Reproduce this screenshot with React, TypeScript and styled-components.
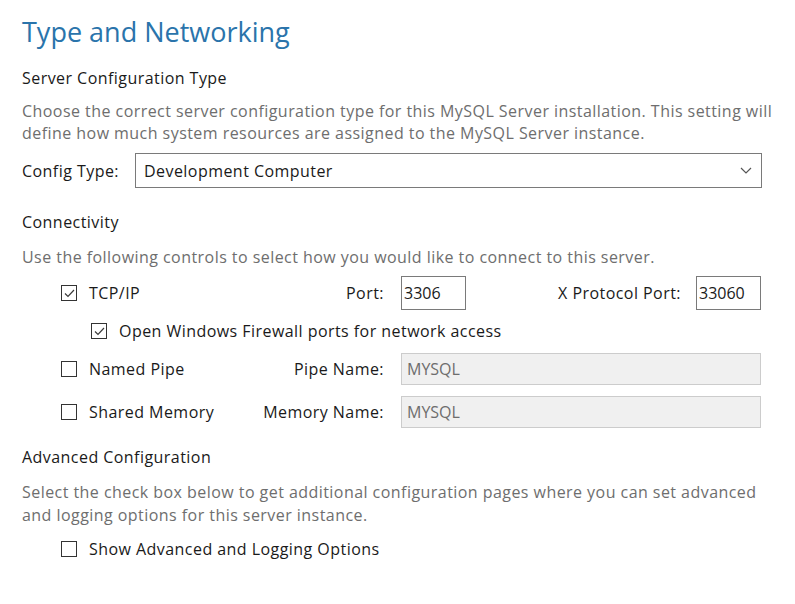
import React from 'react'
import styled, { createGlobalStyle } from 'styled-components'

const GlobalStyle = createGlobalStyle`
    html, body {
        margin: 0;
        padding: 0;
        background: #ffffff;
    }
    body {
        font-family: 'Open Sans', 'Noto Sans', sans-serif;
        font-size: 16px;
        letter-spacing: 0.45px;
        color: #1a1a1a;
    }
`

const CheckIcon = () => (
    <svg width="11" height="9" viewBox="0 0 11 9">
        <polyline
            points="1,4.5 4,7.5 10,1"
            fill="none"
            stroke="#3a3a3a"
            strokeWidth="1.2"
        />
    </svg>
)

const Check = ({ checked, label }: { checked?: boolean; label: string }) => (
    <SCheckLabel>
        <SBox>{checked && <CheckIcon />}</SBox>
        <span>{label}</span>
    </SCheckLabel>
)

export default function App() {
    return (
        <SPage>
            <GlobalStyle />
            <STitle>Type and Networking</STitle>

            <SHeading $top={17}>Server Configuration Type</SHeading>
            <SDesc $top={11}>
                Choose the correct server configuration type for this MySQL Server installation. This setting will
                <br />
                define how much system resources are assigned to the MySQL Server instance.
            </SDesc>
            <SConfigRow>
                <SConfigLabel>Config Type:</SConfigLabel>
                <SSelect>
                    <span>Development Computer</span>
                    <svg width="12" height="7" viewBox="0 0 12 7">
                        <polyline points="1,1 6,6 11,1" fill="none" stroke="#555" strokeWidth="1.2" />
                    </svg>
                </SSelect>
            </SConfigRow>

            <SHeading $top={23}>Connectivity</SHeading>
            <SDesc $top={13}>Use the following controls to select how you would like to connect to this server.</SDesc>

            <SConnGrid>
                <SRow $top={8} $height={34}>
                    <Check checked label="TCP/IP" />
                    <SFieldLabel>Port:</SFieldLabel>
                    <SPortGroup>
                        <SInput $width={65}>3306</SInput>
                        <SPortLabel>X Protocol Port:</SPortLabel>
                        <SInput $width={65}>33060</SInput>
                    </SPortGroup>
                </SRow>
                <SSubRow>
                    <Check checked label="Open Windows Firewall ports for network access" />
                </SSubRow>
                <SRow $top={11} $height={32}>
                    <Check label="Named Pipe" />
                    <SFieldLabel>Pipe Name:</SFieldLabel>
                    <SInput $disabled>MYSQL</SInput>
                </SRow>
                <SRow $top={11} $height={32}>
                    <Check label="Shared Memory" />
                    <SFieldLabel>Memory Name:</SFieldLabel>
                    <SInput $disabled>MYSQL</SInput>
                </SRow>
            </SConnGrid>

            <SHeading $top={18}>Advanced Configuration</SHeading>
            <SDesc $top={13} $lh={23}>
                Select the check box below to get additional configuration pages where you can set advanced
                <br />
                and logging options for this server instance.
            </SDesc>
            <SAdvanced>
                <Check label="Show Advanced and Logging Options" />
            </SAdvanced>
        </SPage>
    )
}

const SPage = styled.div`
    display: flex;
    flex-direction: column;
    width: 795px;
    height: 604px;
    box-sizing: border-box;
    padding: 14px 0 0 22px;
    overflow: hidden;
`
const STitle = styled.h1`
    margin: 0;
    font-size: 27px;
    font-weight: 400;
    letter-spacing: 0;
    line-height: 36px;
    color: #2a74ab;
`
const SHeading = styled.div<{ $top: number }>`
    margin-top: ${(p) => p.$top}px;
    line-height: 22px;
    color: #1a1a1a;
`
const SDesc = styled.div<{ $top: number; $lh?: number }>`
    margin-top: ${(p) => p.$top}px;
    line-height: ${(p) => p.$lh ?? 22}px;
    color: #6e6e6e;
    white-space: nowrap;
`
const SConfigRow = styled.div`
    display: flex;
    align-items: center;
    margin-top: 9px;
    height: 35px;
`
const SConfigLabel = styled.span`
    width: 113px;
`
const SSelect = styled.div`
    display: flex;
    align-items: center;
    justify-content: space-between;
    box-sizing: border-box;
    width: 627px;
    height: 35px;
    padding: 0 9px 0 8px;
    border: 1px solid #7a7a7a;
    background: #fff;
`
const SConnGrid = styled.div`
    display: flex;
    flex-direction: column;
    padding-left: 39px;
`
const SRow = styled.div<{ $top: number; $height: number }>`
    display: grid;
    grid-template-columns: 184px 156px 360px;
    align-items: center;
    margin-top: ${(p) => p.$top}px;
    height: ${(p) => p.$height}px;
`
const SSubRow = styled.div`
    display: flex;
    align-items: center;
    margin-top: 10px;
    height: 22px;
    padding-left: 30px;
`
const SFieldLabel = styled.span`
    text-align: right;
    padding-right: 17px;
`
const SPortGroup = styled.div`
    display: flex;
    align-items: center;
    height: 100%;
`
const SPortLabel = styled.span`
    margin-left: auto;
    margin-right: 15px;
`
const SInput = styled.div<{ $width?: number; $disabled?: boolean }>`
    display: flex;
    align-items: center;
    box-sizing: border-box;
    width: ${(p) => (p.$width ? `${p.$width}px` : '100%')};
    height: 100%;
    padding-left: ${(p) => (p.$disabled ? 5 : 2)}px;
    letter-spacing: 0;
    border: 1px solid ${(p) => (p.$disabled ? '#cccccc' : '#7a7a7a')};
    background: ${(p) => (p.$disabled ? '#f0f0f0' : '#ffffff')};
    color: ${(p) => (p.$disabled ? '#6d6d6d' : '#1a1a1a')};
`
const SCheckLabel = styled.label`
    display: flex;
    align-items: center;
    gap: 12px;
    line-height: 22px;
    white-space: nowrap;
`
const SBox = styled.span`
    display: flex;
    align-items: center;
    justify-content: center;
    box-sizing: border-box;
    width: 16px;
    height: 16px;
    border: 1px solid #333333;
    background: #fff;
`
const SAdvanced = styled.div`
    display: flex;
    margin-top: 11px;
    padding-left: 39px;
    height: 22px;
`
